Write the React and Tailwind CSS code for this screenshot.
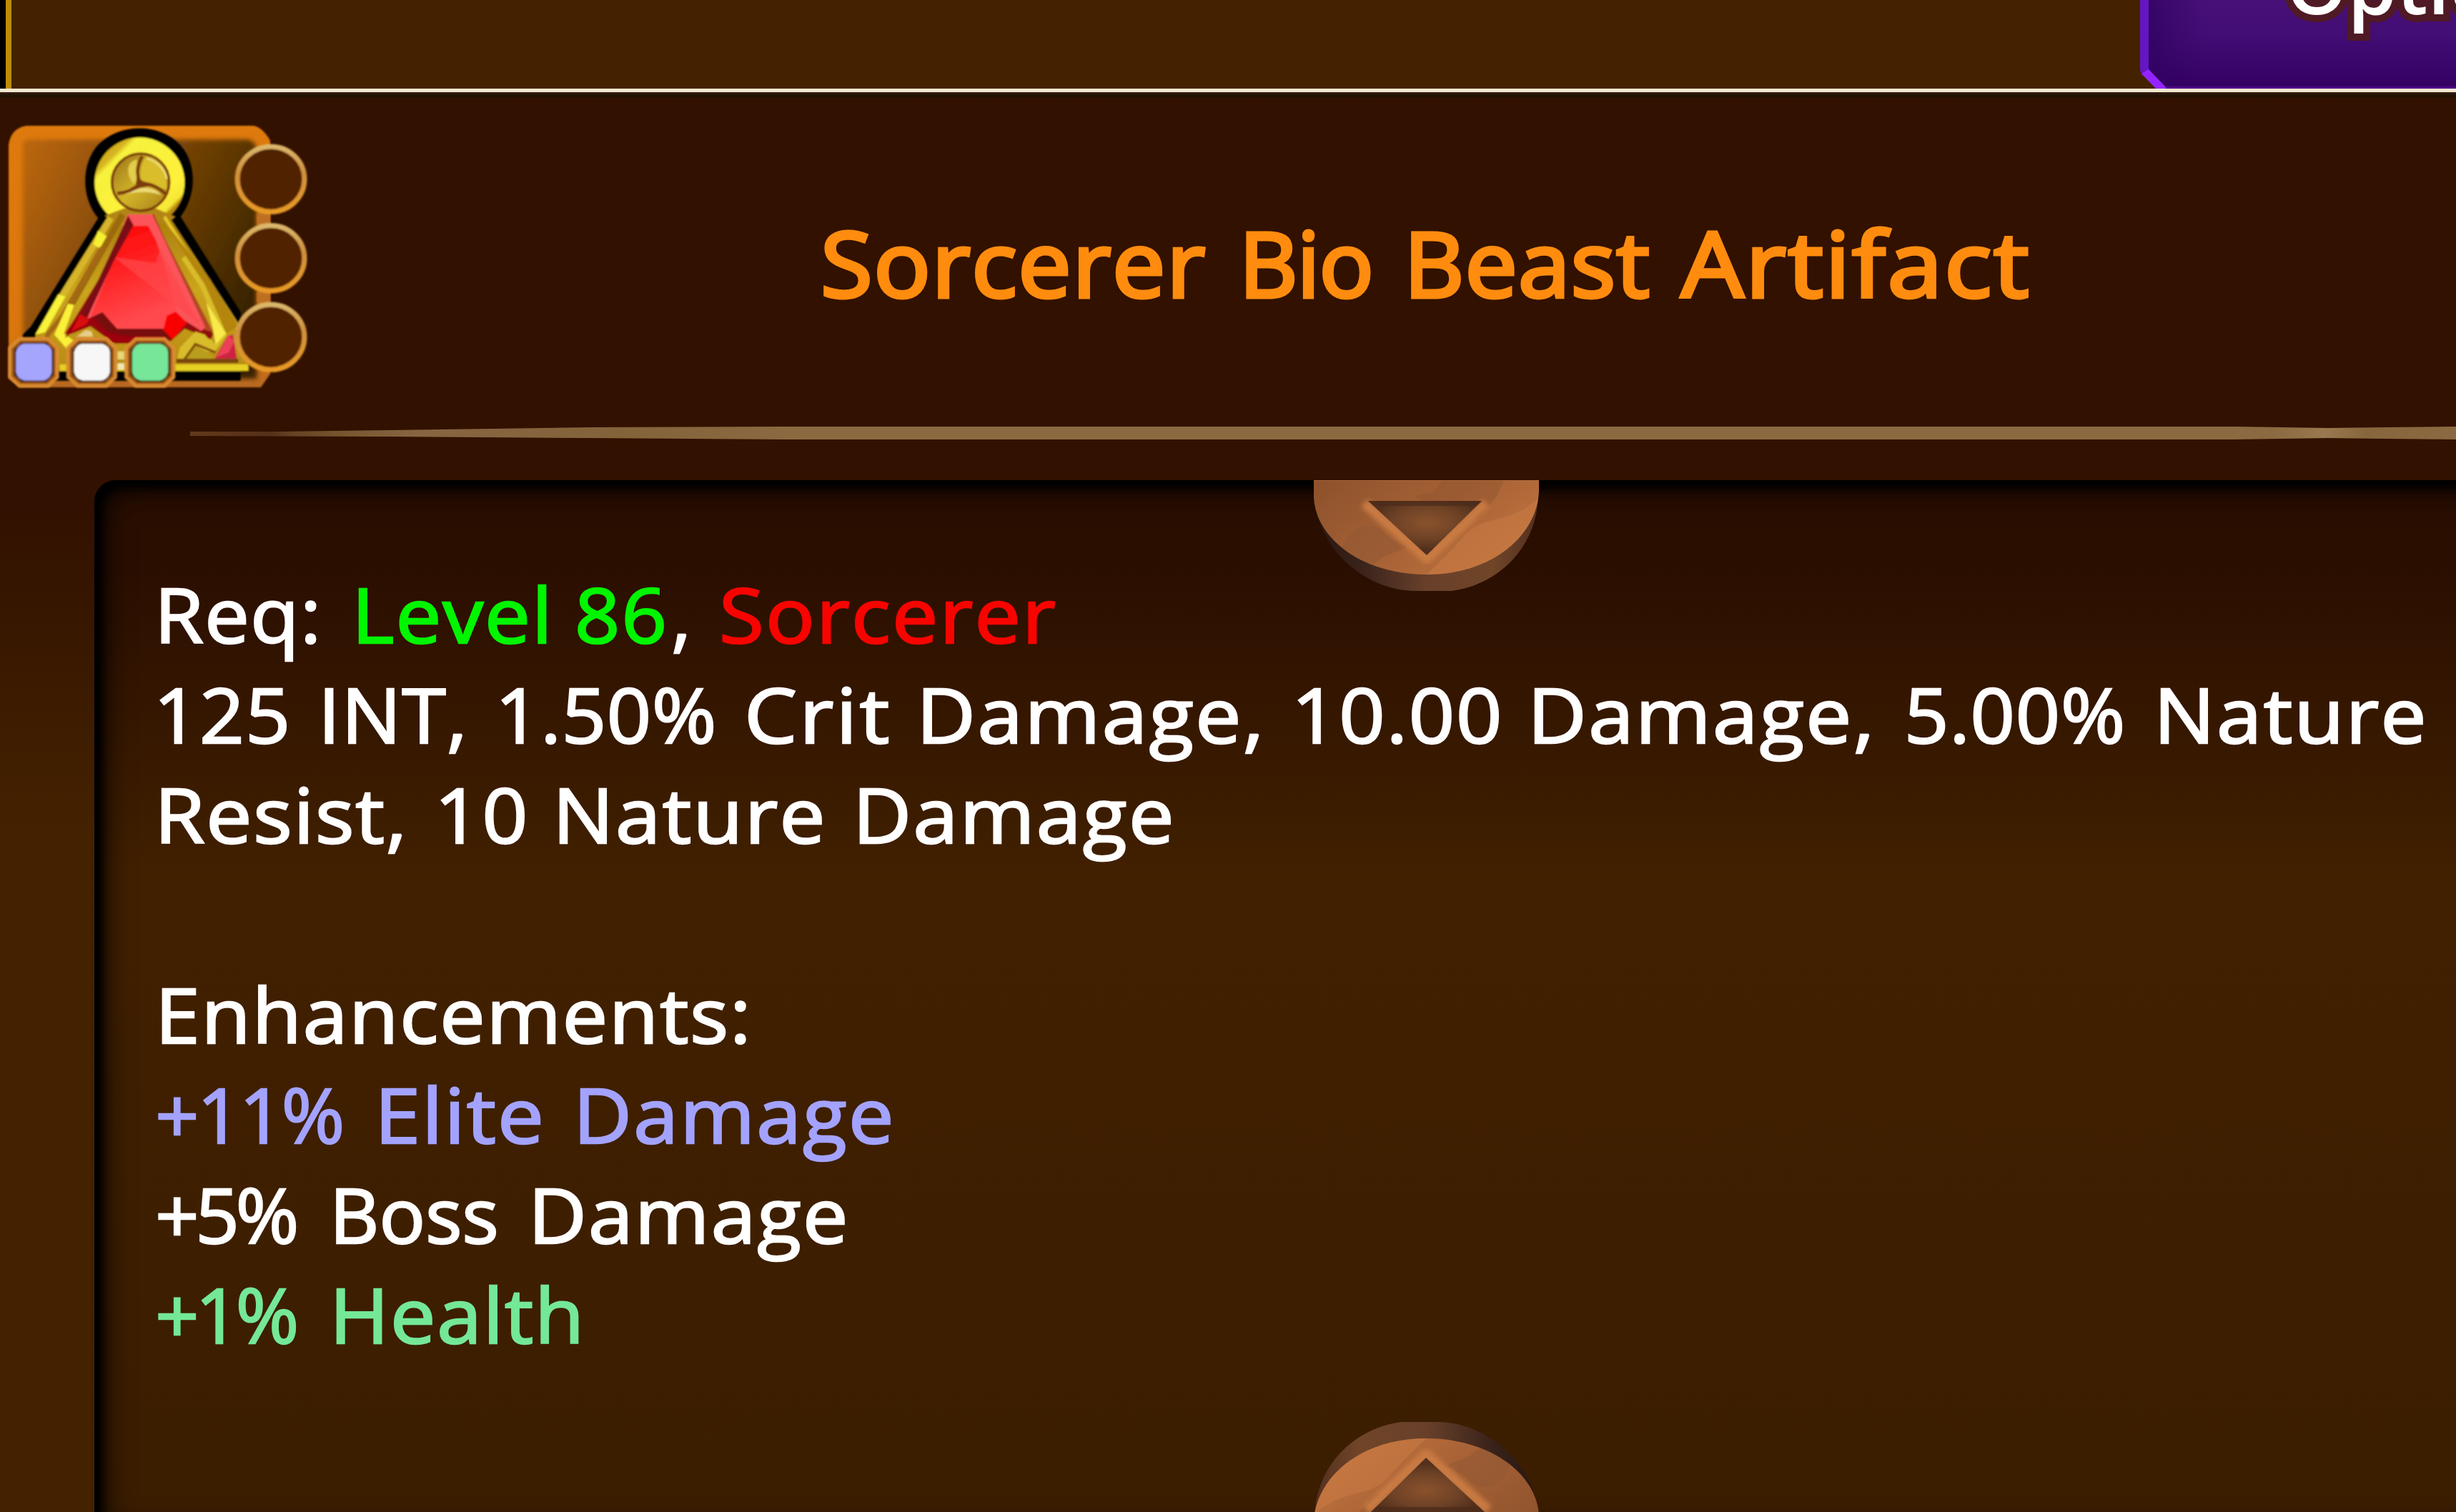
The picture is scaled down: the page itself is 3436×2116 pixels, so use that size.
import React from "react";

const canvas = document.createElement("canvas").getContext("2d");

/* A word whose glyphs, outline included, span w pixels from the box's left edge. */
function Word({ t, w, step, size, color, stroke }) {
  canvas.font = `400 ${size}px "Open Sans"`;
  const m = canvas.measureText(t);
  const ink = m.actualBoundingBoxLeft + m.actualBoundingBoxRight;
  const target = w - stroke;
  const scale = t.length > 1 ? Math.max(1, Math.min(1.1, 1 + 0.65 * (target / ink - 1))) : 1;
  const spacing = t.length > 1 ? (target / scale - ink) / (t.length - 1) : 0;
  return (
    <span className="block shrink-0" style={{ width: step }}>
      <span
        className="block w-max origin-left"
        style={{
          color,
          letterSpacing: spacing,
          marginLeft: m.actualBoundingBoxLeft * scale + stroke / 2,
          transform: `scaleX(${scale})`,
        }}
      >
        {t}
      </span>
    </span>
  );
}

function Line({ words, size, stroke }) {
  return (
    <div className="flex">
      {words.map(([t, x, end, color], i) => (
        <React.Fragment key={i}>
          <Word
            t={t}
            size={size}
            color={color}
            stroke={stroke}
            w={end - x}
            step={i + 1 < words.length ? words[i + 1][1] - x : end - x}
          />{" "}
        </React.Fragment>
      ))}
    </div>
  );
}

const WHITE = "#ffffff";
const GREEN = "#00f500";
const RED = "#f80400";
const LILAC = "#a3a3ff";
const MINT = "#74e896";

const LINES = [
  [["Req:", 225, 443, WHITE], ["Level", 501, 764, GREEN], ["86", 808, 930, GREEN], [",", 942, 960, WHITE], ["Sorcerer", 1010, 1477, RED]],
  [["125", 223, 402, WHITE], ["INT,", 454, 647, WHITE], ["1.50%", 701, 999, WHITE], ["Crit", 1046, 1243, WHITE], ["Damage,", 1291, 1761, WHITE], ["10.00", 1815, 2097, WHITE], ["Damage,", 2146, 2615, WHITE], ["5.00%", 2669, 2970, WHITE], ["Nature", 3022, 3390, WHITE]],
  [["Resist,", 225, 562, WHITE], ["10", 616, 734, WHITE], ["Nature", 782, 1150, WHITE], ["Damage", 1202, 1638, WHITE]],
  [],
  [["Enhancements:", 226, 1044, WHITE]],
  [["+11%", 221, 479, LILAC], ["Elite", 534, 757, LILAC], ["Damage", 811, 1246, LILAC]],
  [["+5%", 221, 415, WHITE], ["Boss", 470, 695, WHITE], ["Damage", 748, 1182, WHITE]],
  [["+1%", 221, 415, MINT], ["Health", 470, 809, MINT]],
];

const TITLE = [["Sorcerer", 1152, 1687], ["Bio", 1743, 1918], ["Beast", 1974, 2308], ["Artifact", 2349, 2838]];

function Knob({ id }) {
  return (
    <svg width="316" height="156" viewBox="0 0 316 156" className="block">
      <defs>
        <linearGradient id={id + "f"} x1="0" y1="0.1" x2="1" y2="0.7">
          <stop offset="0" stopColor="#8e532c" />
          <stop offset="0.5" stopColor="#a86236" />
          <stop offset="1" stopColor="#c4763f" />
        </linearGradient>
        <linearGradient id={id + "r"} x1="0" y1="0" x2="1" y2="0">
          <stop offset="0" stopColor="#2a1710" />
          <stop offset="0.2" stopColor="#38221a" />
          <stop offset="0.5" stopColor="#68402a" />
          <stop offset="0.8" stopColor="#704528" />
          <stop offset="1" stopColor="#523020" />
        </linearGradient>
        <radialGradient id={id + "t"} cx="0.52" cy="0.4" r="0.5">
          <stop offset="0" stopColor="#8a522c" />
          <stop offset="0.6" stopColor="#6e4226" />
          <stop offset="1" stopColor="#52301c" />
        </radialGradient>
        <clipPath id={id + "c"}>
          <path d="M0 0H315V16C312 77 250 132 158 132C66 132 1 80 0 22Z" />
        </clipPath>
        <filter id={id + "b"}><feGaussianBlur stdDeviation="3" /></filter>
      </defs>
      <path d="M1 15C0 90 66 152 138 155H192C253 148 313 98 314 20Z" fill={`url(#${id}r)`} />
      <g clipPath={`url(#${id}c)`}>
        <rect width="316" height="156" fill={`url(#${id}f)`} />
        <path d="M180 0H266L256 22L232 52L206 62L140 22L168 16Z" fill="#8d542f" opacity=".45" />
        <path d="M315 24C280 60 240 50 216 72L190 100L158 132H316Z" fill="#cc7c43" opacity=".5" />
        <path d="M48 80C65 58 90 60 100 76L130 94L96 108L70 130L30 110Z" fill="#8f5733" opacity=".5" />
        <path d="M71 32L158 110L241 32" fill="none" stroke="#c97a43" strokeWidth="14" strokeLinejoin="round" filter={`url(#${id}b)`} />
      </g>
      <path d="M76 29H235L158 105Z" fill={`url(#${id}t)`} />
      <path d="M76 29H235L228 36H84Z" fill="#4c2b19" opacity=".7" />
      <path d="M0 0.5H315" stroke="#bd7446" opacity=".6" />
    </svg>
  );
}

function Artifact() {
  return (
    <svg width="450" height="400" viewBox="0 0 1350 1200" className="block">
      <defs>
        <linearGradient id="frame" x1="0" y1="0" x2="0" y2="1">
          <stop offset="0" stopColor="#df7a10" />
          <stop offset="0.8" stopColor="#d9760c" />
          <stop offset="1" stopColor="#b86a22" />
        </linearGradient>
        <linearGradient id="slot" x1="0" y1="0.1" x2="1" y2="0.6">
          <stop offset="0" stopColor="#b8650b" />
          <stop offset="0.5" stopColor="#794507" />
          <stop offset="1" stopColor="#3a2401" />
        </linearGradient>
        <linearGradient id="gold" x1="0" y1="0" x2="1" y2="1">
          <stop offset="0" stopColor="#b98c10" />
          <stop offset="0.2" stopColor="#d8b622" />
          <stop offset="0.24" stopColor="#f6f23c" />
          <stop offset="0.7" stopColor="#fff03a" />
          <stop offset="0.8" stopColor="#f4e634" />
          <stop offset="0.83" stopColor="#b98910" />
          <stop offset="1" stopColor="#a87808" />
        </linearGradient>
        <linearGradient id="body" x1="0" y1="0" x2="0" y2="1">
          <stop offset="0" stopColor="#a8790c" />
          <stop offset="0.5" stopColor="#cba51c" />
          <stop offset="1" stopColor="#b88c14" />
        </linearGradient>
        <linearGradient id="ball" x1="0" y1="0" x2="1" y2="1">
          <stop offset="0" stopColor="#987018" />
          <stop offset="0.5" stopColor="#d2b52a" />
          <stop offset="1" stopColor="#a77e16" />
        </linearGradient>
        <linearGradient id="ring" x1="0" y1="0" x2="0" y2="1">
          <stop offset="0" stopColor="#dcb86c" />
          <stop offset="0.4" stopColor="#d0923e" />
          <stop offset="1" stopColor="#e99a26" />
        </linearGradient>
        <linearGradient id="ruby" x1="0" y1="0" x2="0.3" y2="1">
          <stop offset="0" stopColor="#fa0a0a" />
          <stop offset="0.3" stopColor="#ff1414" />
          <stop offset="1" stopColor="#ff4a4e" />
        </linearGradient>
        <filter id="softer"><feGaussianBlur stdDeviation="9" /></filter>
        <filter id="fine"><feGaussianBlur stdDeviation="2.6" /></filter>
      </defs>
      <path d="M110 48H1062Q1100 52 1134 110V1090L1095 1146H82L36 1105V130Q44 60 110 48Z" fill="url(#frame)" filter="url(#fine)" />
      <path d="M120 106H1040Q1074 112 1078 150V1110H96V130Q98 110 120 106Z" fill="url(#slot)" filter="url(#softer)" />
      <g filter="url(#fine)">
        <path d="M412 436C340 350 340 210 410 130C500 36 670 34 758 130C828 210 825 340 758 430L1010 830V1118H96V925L130 890Z" fill="#000" />
        <path d="M465 430L530 400H650L710 430L1005 885L1045 1045V1078H130L150 925Z" fill="url(#body)" />
        <circle cx="586" cy="286" r="189" fill="url(#gold)" />
        <path d="M440 425L520 395H655L735 430L700 460H480Z" fill="#b28512" />
        <path d="M465 435L250 780" stroke="#d7b52a" strokeWidth="28" />
        <path d="M412 488L456 516L424 568L392 545Z" fill="#f6f032" />
        <path d="M245 755L275 765L190 915L148 925Z" fill="#f8f23a" />
        <path d="M515 420L300 800L250 925" fill="none" stroke="#9c6a10" strokeWidth="26" />
        <path d="M428 560L260 850L200 925L190 1000" fill="none" stroke="#a46812" strokeWidth="20" />
        <path d="M285 795L312 800L268 922L310 950L285 990L228 925Z" fill="#f9f038" />
        <path d="M690 430L910 780L1000 900" fill="none" stroke="#e4c62a" strokeWidth="14" />
        <path d="M690 450L820 660L950 920L1000 890L880 690" fill="#b4860f" />
        <path d="M770 600L850 720L940 925L900 980L840 905" fill="none" stroke="#d9bc2c" strokeWidth="22" />
        <path d="M866 790L948 920L905 965L895 905Z" fill="#f9e94c" />
        <path d="M538 420H645L700 540L895 925L885 945L775 900L720 950L690 962H480L380 890L290 925L272 940L300 880L440 650Z" fill="#8e0a0e" />
        <path d="M640 420L895 915L860 905L700 620Z" fill="#b34722" />
        <path d="M535 420H640L700 550L862 895L845 910L750 850L430 830L365 860L420 720Z" fill="#fb545a" />
        <path d="M550 468H622L655 530L700 660L740 820L690 900H485L430 830L380 850L480 600Z" fill="url(#ruby)" />
        <path d="M622 468L835 880L480 600L655 625L672 565Z" fill="#ff484c" opacity=".7" />
        <path d="M538 425L560 465L480 610L365 855L340 850Z" fill="#7a1014" />
        <path d="M365 860L430 832L490 900H690L685 960H470L395 880L310 918L272 920L320 850Z" fill="#9c0508" />
        <path d="M390 850L430 832L492 900H690L710 935L530 930L450 915Z" fill="#600a08" opacity=".6" />
        <path d="M700 845L738 828L785 875L725 945L685 905Z" fill="#f80404" />
        <path d="M335 840L375 858L365 880L300 912Z" fill="#d80a0c" />
        <path d="M320 935L360 905L385 912L390 935Z" fill="#e6cd84" />
        <path d="M740 1040L755 980L820 912L860 925L905 985L870 1000L820 968L770 1035Z" fill="#d9bc2a" />
        <path d="M775 1032L820 975L875 1000L900 1032Z" fill="#b99d1a" />
        <path d="M770 1035L820 965L905 1000" fill="none" stroke="#80500c" strokeWidth="10" />
        <path d="M900 1030L955 930L978 925L995 1030Z" fill="#cf2440" />
        <path d="M910 1020L958 930L985 950L960 1000Z" fill="#ee4058" />
        <path d="M740 1035H1000" stroke="#79440a" strokeWidth="18" />
        <path d="M250 1064H1042" stroke="#e6d024" strokeWidth="28" />
        <path d="M490 1012H530" stroke="#e5d678" strokeWidth="34" />
        <path d="M490 1058H530" stroke="#eee8b0" strokeWidth="26" />
        <circle cx="590" cy="285" r="120" fill="url(#ball)" stroke="#7c3c08" strokeWidth="11" />
        <path d="M610 182C665 195 708 250 698 316L590 280C588 245 592 210 610 182Z" fill="#d9bd2c" />
        <path d="M615 184C662 198 694 232 700 272" fill="none" stroke="#f0df7a" strokeWidth="8" />
        <path d="M575 190C525 200 530 260 562 292L576 284Z" fill="#e3cd4a" />
        <path d="M525 335C570 305 640 295 676 338C620 320 575 325 525 335Z" fill="#ebda76" />
        <path d="M597 176C570 222 576 262 588 290C560 318 530 330 492 332M588 290C625 288 665 305 694 334" fill="none" stroke="#7c3c08" strokeWidth="14" />
        <path d="M574 262L602 282L650 296L590 308L545 326L570 296Z" fill="#7c3c08" />
      </g>
      <g filter="url(#fine)">
        <rect x="1078" y="415" width="56" height="45" fill="#bd6f20" />
        <rect x="1078" y="745" width="56" height="45" fill="#bd6f20" />
        {[272, 604, 935].map((y) => (
          <ellipse key={y} cx="1137" cy={y} rx="141" ry="137" fill="#512000" stroke="url(#ring)" strokeWidth="21" />
        ))}
        {[[142, "#a5a5fe"], [386, "#f7f7f7"], [630, "#76e698"]].map(([x, c]) => (
          <g key={x} transform={`translate(${x} 1041)`}>
            <path d="M-60 -98H60L98 -60V62L60 98H-60L-100 62V-60Z" fill="#6b3506" stroke="#d98a30" strokeWidth="16" />
            <path d="M-54 -86H54L86 -54V54L54 86H-54L-86 54V-54Z" fill="#35190a" stroke="#9c5612" strokeWidth="8" />
            <path d="M-44 -78H44Q76 -68 76 -40V42Q68 72 40 77H-40Q-70 70 -76 40V-42Q-68 -72 -44 -78Z" fill={c} />
          </g>
        ))}
      </g>
    </svg>
  );
}

export default function App() {
  return (
    <div className="flex h-[2116px] w-[3436px] flex-col overflow-hidden bg-[#321100] font-['Open_Sans',sans-serif]">
      <header className="flex h-[124px] shrink-0 overflow-hidden bg-[#442200]">
        <div className="w-2 bg-black" />
        <div className="w-2 bg-[#bd8d08]" />
        <div className="grow" />
        <div className="relative h-[124px] w-[442px]">
          <svg width="442" height="124" className="absolute inset-0">
            <defs>
              <linearGradient id="violet" x1="0" y1="0" x2="0" y2="1">
                <stop offset="0" stopColor="#471078" />
                <stop offset="0.4" stopColor="#420d74" />
                <stop offset="1" stopColor="#340062" />
              </linearGradient>
              <linearGradient id="shade" x1="0" y1="0" x2="1" y2="0">
                <stop offset="0" stopColor="#300060" />
                <stop offset="1" stopColor="#300060" stopOpacity="0" />
              </linearGradient>
            </defs>
            <path d="M0 0H442V124H27L1 102Z" fill="url(#violet)" />
            <path d="M12 0H90V124H30L12 96Z" fill="url(#shade)" opacity=".7" />
            <path d="M0 0H12V98L3 106L0 98Z" fill="#6416c4" />
            <path d="M2 103L12 97L38 124H22Z" fill="#9424ff" />
            <path d="M36 122.500H442" stroke="#50008a" strokeWidth="3" />
          </svg>
          <div className="absolute top-[-108px] left-[204px] text-[110px] leading-[170px] font-semibold whitespace-nowrap text-white [paint-order:stroke_fill] [-webkit-text-stroke:20px_#4f1a24]">
            Options
          </div>
        </div>
      </header>
      <div className="h-[5px] shrink-0 bg-[#f3e8cf]" />
      <div className="h-[10px] shrink-0 bg-linear-to-b from-[#352018] via-[#201000] to-[#321100]" />

      <main className="flex grow flex-col bg-linear-to-b from-[#321100] from-29% to-[#442200] to-52%">
        <section className="flex h-[421px] shrink-0 items-start">
          <div className="mt-[21px] w-[450px] shrink-0">
            <Artifact />
          </div>
          <h1 className="mt-[143px] ml-[702px] text-[127px] leading-[170px] text-[#ff8c0e] [-webkit-text-stroke:5px_#ff8c0e]">
            <Line words={TITLE} size={127} stroke={5} />
          </h1>
        </section>

        <div className="mt-[37px] ml-[266px] h-[20px] shrink-0">
          <svg width="3170" height="20" className="block">
            <defs>
              <linearGradient id="rule" x1="0" y1="0" x2="1" y2="0">
                <stop offset="0" stopColor="#64391a" />
                <stop offset="0.035" stopColor="#55301a" />
                <stop offset="0.045" stopColor="#664222" />
                <stop offset="0.07" stopColor="#785830" />
                <stop offset="0.1" stopColor="#876542" />
                <stop offset="0.19" stopColor="#83633a" />
                <stop offset="0.27" stopColor="#8c6a41" />
                <stop offset="0.92" stopColor="#8c6a41" />
                <stop offset="0.942" stopColor="#9a7850" />
                <stop offset="0.96" stopColor="#88663d" />
                <stop offset="1" stopColor="#8c6a41" />
              </linearGradient>
            </defs>
            <path d="M0 7L120 7L280 5L560 1L830 0H2860L2990 2L3170 0V18L2990 16L2860 18H830L560 16L280 14L0 13Z" fill="url(#rule)" />
          </svg>
        </div>

        <section className="relative mt-[55px] -mr-20 ml-[132px] grow overflow-hidden rounded-tl-[30px] bg-linear-to-b from-[#2a0e00] from-8% via-[#412000] via-38% to-[#3b1d00] shadow-[inset_12px_12px_12px_#000,inset_20px_20px_36px_rgba(0,0,0,0.6)]">
          <div className="absolute top-0 left-[1706px]">
            <Knob id="down" />
          </div>
          <div className="flex flex-col pt-[117px] text-[107px] leading-[140px] [-webkit-text-stroke:2.5px_currentcolor]">
            {LINES.map((words, i) => (
              <div key={i} className="flex h-[140px]">
                <div className="shrink-0" style={{ width: (words[0] ? words[0][1] : 221) - 132 }} />
                <Line words={words} size={107} stroke={2.5} />
              </div>
            ))}
          </div>
          <div className="absolute top-[1317px] left-[1705px] rotate-180">
            <Knob id="up" />
          </div>
        </section>
      </main>
    </div>
  );
}
